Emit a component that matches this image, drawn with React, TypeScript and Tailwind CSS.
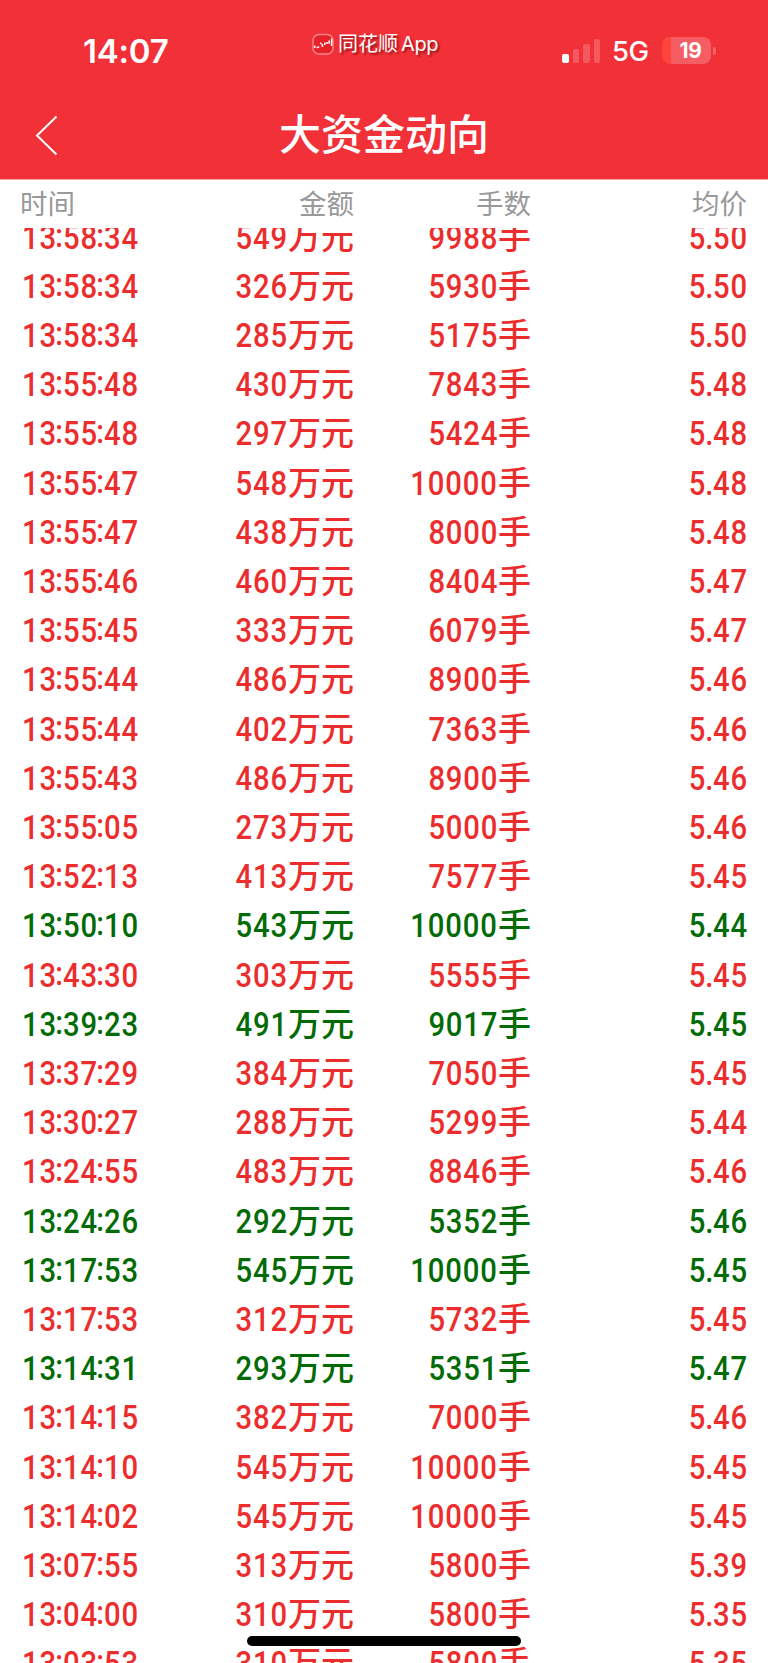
import { Fragment } from "react";

type Trade = [time: string, amount: number, lots: number, price: string, sell?: boolean];

const trades: Trade[] = [
  ["13:58:34", 549, 9988, "5.50"],
  ["13:58:34", 326, 5930, "5.50"],
  ["13:58:34", 285, 5175, "5.50"],
  ["13:55:48", 430, 7843, "5.48"],
  ["13:55:48", 297, 5424, "5.48"],
  ["13:55:47", 548, 10000, "5.48"],
  ["13:55:47", 438, 8000, "5.48"],
  ["13:55:46", 460, 8404, "5.47"],
  ["13:55:45", 333, 6079, "5.47"],
  ["13:55:44", 486, 8900, "5.46"],
  ["13:55:44", 402, 7363, "5.46"],
  ["13:55:43", 486, 8900, "5.46"],
  ["13:55:05", 273, 5000, "5.46"],
  ["13:52:13", 413, 7577, "5.45"],
  ["13:50:10", 543, 10000, "5.44", true],
  ["13:43:30", 303, 5555, "5.45"],
  ["13:39:23", 491, 9017, "5.45", true],
  ["13:37:29", 384, 7050, "5.45"],
  ["13:30:27", 288, 5299, "5.44"],
  ["13:24:55", 483, 8846, "5.46"],
  ["13:24:26", 292, 5352, "5.46", true],
  ["13:17:53", 545, 10000, "5.45", true],
  ["13:17:53", 312, 5732, "5.45"],
  ["13:14:31", 293, 5351, "5.47", true],
  ["13:14:15", 382, 7000, "5.46"],
  ["13:14:10", 545, 10000, "5.45"],
  ["13:14:02", 545, 10000, "5.45"],
  ["13:07:55", 313, 5800, "5.39"],
  ["13:04:00", 310, 5800, "5.35"],
  ["13:03:53", 310, 5800, "5.35"],
];

function StatusBar() {
  return (
    <div className="flex h-[92px] items-start text-white">
      <div className="w-[312px] pl-[83px] pt-[31px] font-['Inter'] text-[33px] font-semibold leading-[40px] tracking-[-0.2px]">
        14:07
      </div>
      <div className="flex w-[250px] items-center pt-[30px]">
        <svg className="h-[22px] w-[22px]" viewBox="0 0 22 22" fill="none">
          <rect x="1" y="1.5" width="20" height="19.5" rx="6" fill="#e8202a" stroke="#f9868b" strokeWidth="1.4" />
          <path d="M2.700 12.500v2.500M4.800 13.800l.8 1.200M6.200 14.500l.8-1M8.200 9.800l1.300 1M10.400 11v3M12.800 9.500v2.500M15 9v2M17.100 7.500v3.200M19.600 5.500v7.500" stroke="#fff" strokeWidth="1.500" />
        </svg>
        <span className="ml-[4px] font-['Inter','Noto_Sans_CJK_SC',sans-serif] text-[20px] leading-[28px] [text-shadow:2px_2px_2px_rgba(80,0,0,0.55)]">
          同花顺<span className="ml-[3px] tracking-[-0.4px]">App</span>
        </span>
      </div>
      <div className="flex items-center pt-[37px]">
        <div className="-mt-[2px] flex h-[24px] items-end gap-[4px]">
          <i className="h-[9px] w-[6.500px] rounded-[2px] bg-white" />
          <i className="h-[14px] w-[6.500px] rounded-[2px] bg-white/20" />
          <i className="h-[19px] w-[6.500px] rounded-[2px] bg-white/20" />
          <i className="h-[24px] w-[6.500px] rounded-[2px] bg-white/20" />
        </div>
        <span className="-mt-px ml-[12px] w-[37px] font-['Inter'] text-[27.500px] font-medium leading-[30px] tracking-[-0.5px]">5G</span>
        <div className="-mt-[2px] ml-[13px] flex h-[27px] w-[49px] items-center justify-center overflow-hidden rounded-[8px] bg-[linear-gradient(90deg,#ff453a_9px,#f55d64_9px)] pl-[8px] font-['Inter'] text-[21px] font-bold leading-[27px] tracking-[-0.3px]">
          19
        </div>
        <i className="-mt-[2px] ml-[2px] h-[8px] w-[3px] rounded-r-full bg-white/25" />
      </div>
    </div>
  );
}

const digits = "scale-x-[0.86] font-['Roboto'] font-medium tracking-[1px]";
const unit = "-mt-[2px] mb-[2px] font-['Noto_Sans_CJK_SC',sans-serif] text-[33px] font-medium";

function TradeRow({ trade }: { trade: Trade }) {
  const [time, amount, lots, price, sell] = trade;
  const color = sell ? "text-[#036b06]" : "text-[#eb2d2d]";
  return (
    <div className={`flex h-[49.21px] shrink-0 items-center whitespace-nowrap text-[34px] leading-[49px] ${color}`}>
      <div className="flex w-[154px] pl-[22px]">
        <span className={`origin-left ${digits}`}>
          {time.split(":").map((part, i) => (
            <Fragment key={i}>
              {i > 0 && <span className="-ml-[2px] -mr-px align-[2px] leading-none">:</span>}
              {part}
            </Fragment>
          ))}
        </span>
      </div>
      <div className="flex w-[200px] justify-end">
        <span className={`origin-right ${digits}`}>{amount}</span>
        <span className={unit}>万元</span>
      </div>
      <div className="flex w-[177px] justify-end">
        <span className={`origin-right ${digits}`}>{lots}</span>
        <span className={unit}>手</span>
      </div>
      <div className="flex w-[217px] justify-end">
        <span className={`origin-right ${digits}`}>
          {price[0]}
          <span className="-ml-px -mr-[1.500px]">.</span>
          {price.slice(2)}
        </span>
      </div>
    </div>
  );
}

export default function App() {
  return (
    <div className="relative flex h-[1663px] w-[768px] flex-col overflow-hidden bg-white font-['Noto_Sans_CJK_SC',sans-serif]">
      <header className="h-[180px] shrink-0 border-b border-[#f9a5a8] bg-[#f23037]">
        <StatusBar />
        <div className="grid h-[86px] grid-cols-[100px_1fr_100px] items-center text-white">
          <svg className="ml-[34px] h-[42px] w-[26px]" viewBox="0 0 26 42" fill="none" stroke="currentColor" strokeWidth="2">
            <path d="M22.500 2.500L3 21.500L22.500 40.500" />
          </svg>
          <h1 className="pb-[7px] text-center text-[42px] font-medium leading-[60px]">大资金动向</h1>
        </div>
      </header>
      <div className="flex h-[48px] shrink-0 items-center pb-[4px] text-[27.500px] leading-[44px] text-[#999999]">
        <span className="w-[154px] pl-[20px]">时间</span>
        <span className="w-[200px] text-right">金额</span>
        <span className="w-[177px] text-right">手数</span>
        <span className="w-[216px] text-right">均价</span>
      </div>
      <main className="min-h-0 flex-1 overflow-hidden">
        <div className="-mt-[15.500px] flex flex-col">
          {trades.map((trade, i) => (
            <TradeRow key={i} trade={trade} />
          ))}
        </div>
      </main>
      <div className="absolute bottom-[17px] left-[247px] h-[10px] w-[274px] rounded-full bg-black" />
    </div>
  );
}
